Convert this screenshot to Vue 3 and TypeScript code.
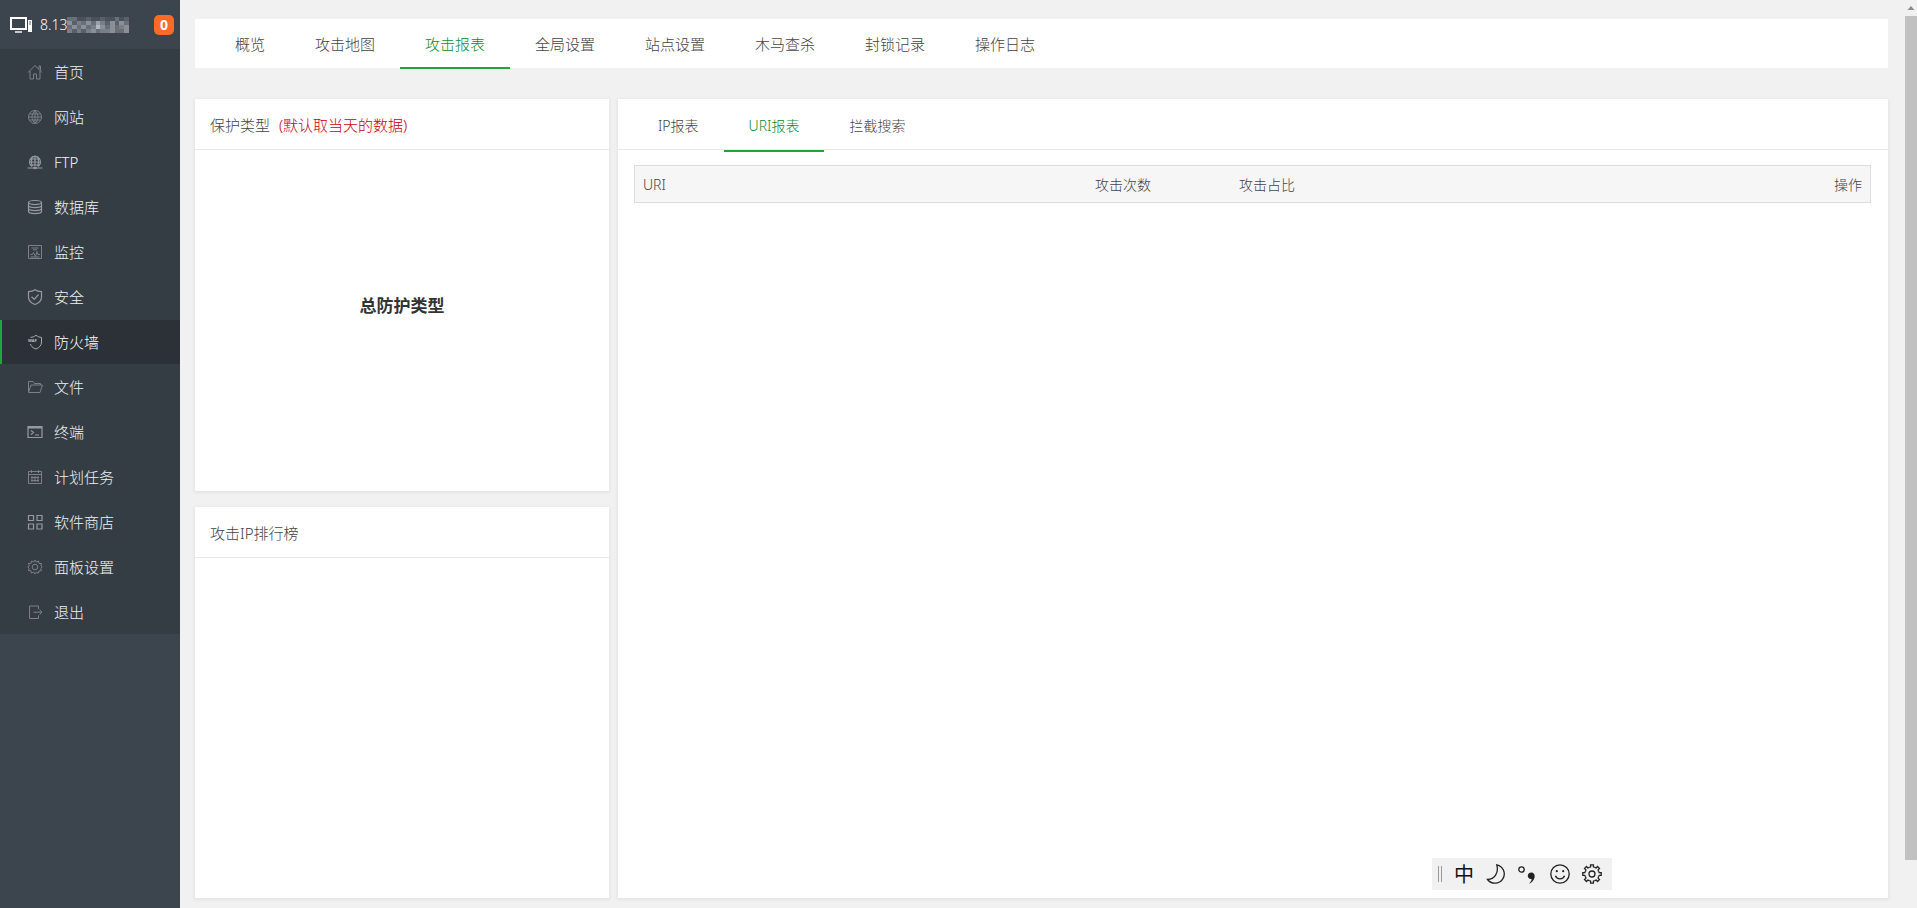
<script setup lang="ts">
import { ref } from 'vue'

interface MenuItem {
  name: string
  paths: string[]
  tone?: string
  label?: string
}

const menu: MenuItem[] = [
  { name: '首页', paths: ['M1 8.5 8 1.5l7 7', 'M3 7v8h3.5v-5h3v5H13V7', 'M12 5V2h1.5v4.5'] },
  { name: '网站', paths: ['M8 1.5a6.5 6.5 0 1 0 0 13a6.5 6.5 0 1 0 0-13z', 'M8 1.5c-4 4-4 9 0 13c4-4 4-9 0-13z', 'M2.5 5h11M1.5 8h13M2.5 11h11M8 1.5v13'] },
  { name: 'FTP', tone: 'bright', paths: ['M5 12.5a5.5 5.5 0 1 1 6 0', 'M8 1.5v11M5.5 12c-1.5-3-1.5-6 0-9.5M10.5 12c1.5-3 1.5-6 0-9.5', 'M3 5h10M2.5 8h11M3.5 11h9M.5 14h15', 'M7 13.5h2v1H7z'] },
  { name: '数据库', tone: 'bright', paths: ['M1.5 3.5c0-2.7 13-2.7 13 0s-13 2.7-13 0z', 'M1.5 3.5v9c0 2.7 13 2.7 13 0v-9', 'M1.5 6.5c0 2.7 13 2.7 13 0M1.5 9.5c0 2.7 13 2.7 13 0'] },
  { name: '监控', paths: ['M1.5 1.5h13v13h-13z', 'M4.5 4h7M6 5.8h4M3.5 10.5h2l1-2 2 4 1.5-5 1 3h2M3.5 13h9'] },
  { name: '安全', tone: 'bright', paths: ['M8 .8C6 2.4 4 2.7 1.5 2.7V8c0 3.8 2.5 6 6.5 7.5c4-1.5 6.5-3.7 6.5-7.5V2.7C12 2.7 10 2.4 8 .8z', 'M4.5 7.8 7.3 10.3 11.5 5.5'] },
  { name: '防火墙', tone: 'active-tone', label: 'WAF', paths: ['M3.5 3.3c2 0 3.5-.5 5.500-2c2 1.5 3.500 2 5.500 2V8c0 3.500-2 5.500-5.500 7C5.500 13.800 3.800 12 3.500 10'] },
  { name: '文件', paths: ['M1.5 13V2.5H6l1.5 2h6V6', 'M1.5 13.5 4 6h11.5l-2.5 7.5z'] },
  { name: '终端', tone: 'bright', paths: ['M1 2.5h14v11H1z', 'M1 4h14M1 3h14', 'M4 6.5 6.5 8.5 4 10.5M8 11h4'] },
  { name: '计划任务', paths: ['M1.5 2.5h13v12h-13z', 'M1.5 5.5h13M4 8.5h8M4 11.5h8M5 7v6M8 7v6M11 7v6M4.5 1v3M11.5 1v3'] },
  { name: '软件商店', tone: 'bright', paths: ['M1.5 1.5h5v5h-5zM10 1.5h5v5h-5zM1.5 10h5v5h-5zM10 10h5v5h-5z'] },
  { name: '面板设置', paths: ['M8 1l1.3 2 2.2-1 .5 2.4 2.5.1-.7 2.3L15.2 8l-1.5 1.4.8 2.3-2.5.2-.7 2.3-2.1-1L8 15l-1.4-1.9-2.2 1-.5-2.4-2.5-.2.8-2.2L.8 8l1.5-1.3-.8-2.3 2.5-.1.6-2.3 2.1 1z', 'M8 5.2a2.8 2.8 0 1 0 0 5.6a2.8 2.8 0 1 0 0-5.6z'] },
  { name: '退出', paths: ['M11.5 5V2h-9v12.5h9V11.5', 'M6.5 8.2h8', 'M12.5 5.8 15 8.2l-2.500 2.400'] },
]
const activeMenu = ref('防火墙')

const tabs = ['概览', '攻击地图', '攻击报表', '全局设置', '站点设置', '木马查杀', '封锁记录', '操作日志']
const activeTab = ref('攻击报表')

const reports = ['IP报表', 'URI报表', '拦截搜索']
const activeReport = ref('URI报表')

// Shades of the tiles that mask the rest of the server address
const rows = [
  [3, 3, 1, 1, 2, 1, 1, 2, 1, 1, 3, 1, 2],
  [5, 2, 4, 3, 5, 3, 6, 4, 2, 5, 2, 5, 3],
  [3, 5, 3, 5, 3, 4, 7, 5, 3, 5, 3, 4, 5],
  [4, 2, 4, 2, 4, 5, 3, 4, 4, 5, 3, 3, 5],
]
const shades = ['#3c444d', '#4a515a', '#5a6069', '#696e78', '#797f88', '#8b9098', '#9da0a8', '#b4b7bd']
const tiles = rows.flatMap((row, y) => row.map((s, x) => ({ x: x * 5, y: y * 4, fill: shades[s] })))

const teeth = [0, 45, 90, 135, 180, 225, 270, 315]
</script>

<template>
  <div class="layout">
    <aside class="sidebar">
      <header class="server">
        <svg class="monitor" viewBox="0 0 22 16" aria-hidden="true">
          <path d="M1 1h15v11H1z" fill="none" stroke="#fff" stroke-width="2" />
          <path d="M5 14h7v2H5z" fill="#c6c9cc" />
          <path d="M18 3h4v12h-4z" fill="#fff" />
          <path d="M19 5h2M19 7h2" stroke="#59616a" />
        </svg>
        <span class="address">8.13</span>
        <svg class="mask" viewBox="0 0 65 16" preserveAspectRatio="none" shape-rendering="crispEdges" aria-hidden="true">
          <rect v-for="(t, i) in tiles" :key="i" :x="t.x" :y="t.y" width="5" height="4" :fill="t.fill" />
        </svg>
        <span class="badge">0</span>
      </header>
      <nav class="menu">
        <a
          v-for="item in menu"
          :key="item.name"
          href="#"
          :class="{ current: item.name === activeMenu }"
          @click.prevent="activeMenu = item.name"
        >
          <svg class="icon" :class="item.tone" viewBox="0 0 16 16" aria-hidden="true">
            <path v-for="p in item.paths" :key="p" :d="p" />
            <text v-if="item.label" x="1" y="8">{{ item.label }}</text>
          </svg>
          <span>{{ item.name }}</span>
        </a>
      </nav>
    </aside>

    <main class="content">
      <nav class="tabs">
        <button
          v-for="tab in tabs"
          :key="tab"
          type="button"
          :class="{ on: tab === activeTab }"
          @click="activeTab = tab"
        >{{ tab }}</button>
      </nav>

      <div class="board">
        <section class="card">
          <h2 class="card-head">保护类型 <span class="note">(默认取当天的数据)</span></h2>
          <div class="chart">总防护类型</div>
        </section>
        <section class="card">
          <h2 class="card-head">攻击IP排行榜</h2>
        </section>
        <section class="card report">
          <nav class="card-head subtabs">
            <button
              v-for="r in reports"
              :key="r"
              type="button"
              :class="{ on: r === activeReport }"
              @click="activeReport = r"
            >{{ r }}</button>
          </nav>
          <div class="table-wrap">
            <table>
              <thead>
                <tr>
                  <th class="uri">URI</th>
                  <th class="count">攻击次数</th>
                  <th>攻击占比</th>
                  <th class="action">操作</th>
                </tr>
              </thead>
            </table>
          </div>
        </section>
      </div>
    </main>

    <div class="scrollbar" aria-hidden="true">
      <svg viewBox="0 0 12 16"><path d="M2.5 10 6 6l3.5 4z" fill="#8b8b8b" /></svg>
      <div class="thumb"></div>
    </div>

    <div class="ime">
      <span class="grip"></span>
      <span class="lang">中</span>
      <svg viewBox="0 0 20 20"><path d="M10.8.8A9.3 9.3 0 1 1 1.500 15.500C8.500 15.500 13 9 10.800.8z" /></svg>
      <svg viewBox="0 0 20 20">
        <circle cx="3.5" cy="5.5" r="2.7" />
        <path class="solid" d="M12.800 8.500c2.800 0 4.300 2 3.800 4.700c-.5 2.800-2.500 5.300-5.600 6.600c1.700-1.700 2.600-3.200 2.600-4.800c-4.600.6-5.200-6-.8-6.500z" />
      </svg>
      <svg viewBox="0 0 20 20">
        <circle cx="10" cy="10" r="9.2" />
        <path d="M5.500 11.800c1.200 4 7.800 4 9 0" />
        <circle class="solid" cx="6.8" cy="7.2" r="1.1" />
        <circle class="solid" cx="13.2" cy="7.2" r="1.1" />
      </svg>
      <svg viewBox="0 0 20 20">
        <circle cx="10" cy="10" r="3" />
        <path
          v-for="a in teeth"
          :key="a"
          :transform="`rotate(${a} 10 10)`"
          d="M7.300 3.500 8.600 2.800V.8h2.800v2l1.300.7"
        />
      </svg>
    </div>
  </div>
</template>

<style>
body {
  background: #f1f1f1;
}
</style>

<style scoped>
.layout {
  display: flex;
  min-height: 100vh;
  color: #444;
  font: 300 15px/20px "Noto Sans", "Noto Sans CJK SC", sans-serif;
}

.sidebar {
  flex: 0 0 180px;
  background: #3c444d;
}

.server {
  display: flex;
  align-items: center;
  box-sizing: border-box;
  height: 49px;
  padding: 0 6px 0 10px;
  color: #fff;
  font-size: 14px;
}

.monitor {
  width: 22px;
  height: 16px;
  margin-right: 8px;
}

.mask {
  width: 62px;
  height: 16px;
}

.badge {
  width: 20px;
  margin-left: auto;
  border-radius: 5px;
  background: #fb6a26;
  font-weight: 700;
  text-align: center;
}

.menu {
  display: flex;
  flex-direction: column;
  gap: 1px;
  padding-top: 1px;
  background: #353d44;
}

.menu a {
  display: flex;
  align-items: center;
  gap: 11px;
  height: 44px;
  padding-left: 25px;
  border-left: 2px solid transparent;
  color: #f0f3f5;
  text-decoration: none;
}

.menu a.current {
  border-color: #20a53a;
  background: #2c3138;
  color: #fff;
}

.icon {
  width: 16px;
  height: 16px;
  fill: none;
  stroke: #7b8187;
}

.icon.bright {
  stroke: #949a9f;
  stroke-width: 1.2;
}

.icon.active-tone {
  stroke: #a8abaf;
}

.icon text {
  fill: #c0c3c6;
  stroke: #2c3138;
  stroke-width: 1;
  paint-order: stroke;
  font: 700 4px "Open Sans", sans-serif;
}

.content {
  display: flex;
  flex: 1;
  flex-direction: column;
  gap: 31px;
  min-width: 0;
  padding: 19px 17px 10px 15px;
}

button {
  padding: 2px 25px 0;
  border: 0;
  border-bottom: 2px solid transparent;
  background: none;
  color: inherit;
  font: inherit;
  cursor: pointer;
}

button.on {
  border-color: #20a53a;
  color: #108a2a;
}

.tabs {
  display: flex;
  height: 49px;
  padding-left: 15px;
  background: #fff;
}

.tabs button {
  height: 50px;
}

.board {
  display: grid;
  flex: 1;
  grid-template-columns: minmax(0, 414fr) minmax(0, 1270fr);
  grid-template-rows: 1fr 1fr;
  gap: 16px 9px;
}

.card {
  display: flex;
  flex-direction: column;
  background: #fff;
  box-shadow: 0 1px 3px 1px #e4e4e4;
}

.report {
  grid-row: 1 / 3;
  grid-column: 2;
}

.card-head {
  box-sizing: border-box;
  height: 51px;
  margin: 0;
  padding: 16px 15px 0;
  border-bottom: 1px solid #eaeaea;
  font-size: 15px;
  font-weight: 300;
}

.note {
  margin-left: 5px;
  color: #c80010;
}

.subtabs {
  display: flex;
  padding-top: 0;
  font-size: 14px;
}

.subtabs button {
  height: 53px;
}

.chart {
  display: grid;
  flex: 1;
  place-items: center;
  padding-bottom: 28px;
  color: #333;
  font-size: 17px;
  font-weight: 700;
}

.table-wrap {
  padding: 15px 17px 15px 16px;
}

table {
  width: 100%;
  border: 1px solid #ddd;
  border-spacing: 0;
  background: #f6f6f6;
  font-size: 14px;
  table-layout: fixed;
}

th {
  height: 34px;
  padding: 2px 8px 0;
  font-weight: 300;
  text-align: left;
}

.uri {
  width: 436px;
}

.count {
  width: 128px;
}

.action {
  text-align: right;
}

.scrollbar {
  position: sticky;
  top: 0;
  display: flex;
  flex: 0 0 12px;
  flex-direction: column;
  height: 100vh;
  background: #f1f1f1;
}

.scrollbar svg {
  width: 12px;
  height: 16px;
}

.thumb {
  height: 93%;
  background: #c1c1c1;
}

.ime {
  position: fixed;
  right: 305px;
  bottom: 18px;
  display: flex;
  align-items: center;
  gap: 12px;
  box-sizing: border-box;
  height: 32px;
  padding: 0 10px 0 6px;
  background: #f1f1f1;
}

.ime svg {
  width: 20px;
  height: 20px;
  fill: none;
  stroke: #222;
  stroke-width: 1.3;
}

.ime svg .solid {
  fill: #222;
  stroke: none;
}

.grip {
  width: 2px;
  height: 16px;
  border: solid #999;
  border-width: 0 1px;
}

.lang {
  width: 20px;
  padding-top: 2px;
  color: #111;
  font-size: 20px;
  font-weight: 400;
}
</style>
